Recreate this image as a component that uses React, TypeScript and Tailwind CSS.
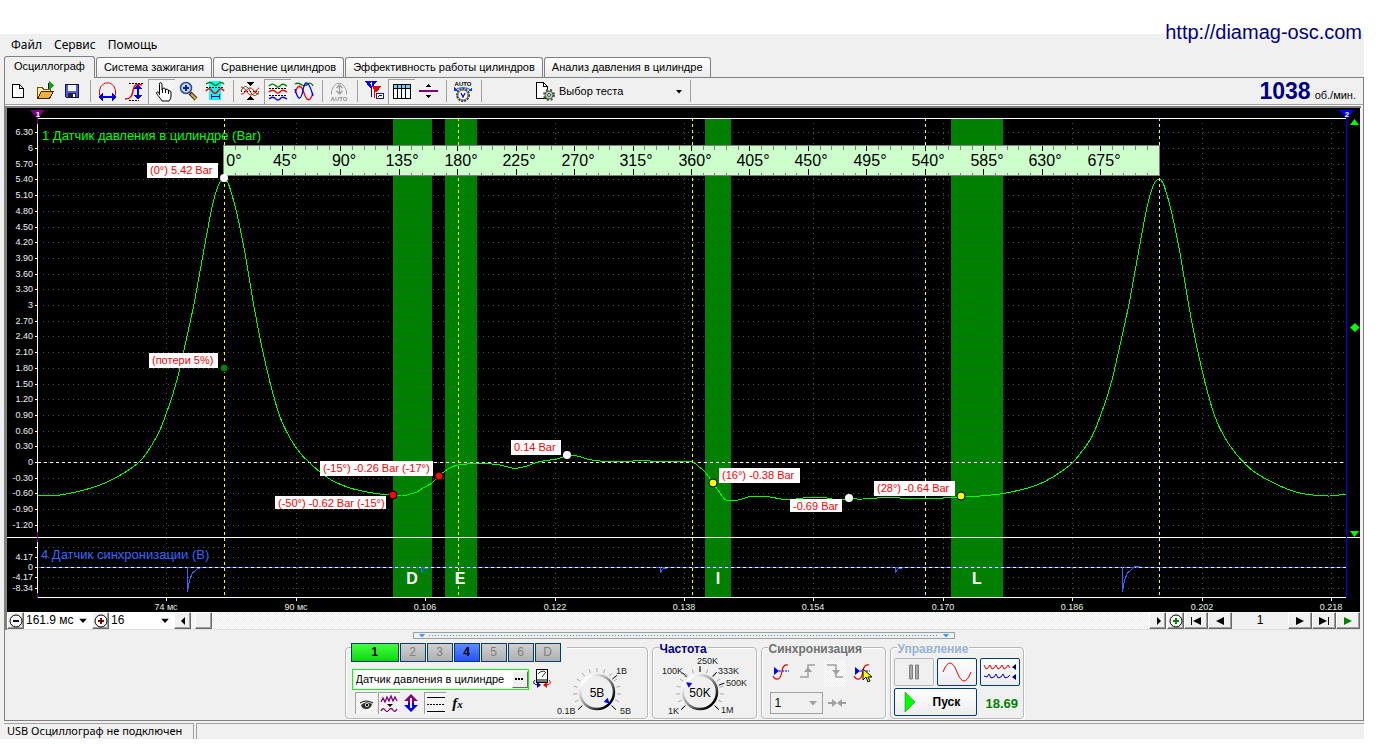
import React from "react";

type Pt = [number, number];

const TEXTURE =
  "bg-[repeating-conic-gradient(#ffffff_0_25%,#ececec_0_50%)] bg-[length:2px_2px]";

/* ---------- toolbar icons ---------- */

function Icon({ children, label }: { children: React.ReactNode; label?: string }) {
  return (
    <svg
      width="22"
      height="22"
      viewBox="0 0 22 22"
      fill="none"
      shapeRendering="crispEdges"
      aria-label={label}
      className="block shrink-0"
    >
      {children}
    </svg>
  );
}

const NewIcon = () => (
  <Icon>
    <path d="M4.500 4.500h7l4 4v9h-11z" fill="#fff" stroke="#000" />
    <path d="M11.500 4.500v4h4" stroke="#000" />
  </Icon>
);
const OpenIcon = () => (
  <Icon>
    <path d="M2.500 18.500v-11h5l1 2h7v3" fill="#ffe9a0" stroke="#7a5200" />
    <path d="M2.500 18.500l4-7h12l-4 7z" fill="#f0b040" stroke="#3a2600" />
    <path d="M13.500 9V3" stroke="#000" />
    <path d="M14 1v9l5-4.500z" fill="#00b000" />
  </Icon>
);
const SaveIcon = () => (
  <Icon>
    <path d="M3.500 4.500h13v13h-12l-1-1z" fill="#5b5bd0" stroke="#101050" />
    <rect x="6" y="5" width="8" height="6" fill="#f4f4f4" />
    <rect x="6" y="13" width="8" height="4" fill="#202040" />
    <rect x="11" y="14" width="2" height="3" fill="#fff" />
  </Icon>
);
const PeriodIcon = () => (
  <Icon>
    <path d="M2.500 15.500V11l1-4 3-3 2-1h4l2 1 3 3 1 4v4.500" stroke="#f00000" shapeRendering="auto" />
    <path d="M3 17h15" stroke="#0000f0" strokeWidth="2" />
    <path d="M1 17l5-4v8zM20 17l-5-4v8z" fill="#0000f0" />
  </Icon>
);
const AmplitudeIcon = () => (
  <Icon>
    <path d="M5 3.500h15M5 20.500h10" stroke="#000" strokeDasharray="2 1" />
    <path d="M1 19c6 0 7-3 8-8s2-8 9-6" stroke="#f00000" strokeWidth="1.500" shapeRendering="auto" />
    <path d="M14 6v12" stroke="#0000f0" strokeWidth="2" />
    <path d="M10 9l4-5 4 5zM10 15l4 5 4-5z" fill="#0000f0" />
  </Icon>
);
const HandIcon = () => (
  <Icon>
    <path
      d="M8.500 13.500v-10q0-2 1-2t1.500 2v5q.5-1.500 2-1.500t1.500 2q.5-1 1.800-.8t1.200 1.800q2-1 2.500 1v4q0 3-2 5h-7q-1-2-4-5.500-2.500-3-.8-3.500t2.300 2z"
      fill="#fff"
      stroke="#000"
      shapeRendering="auto"
    />
    <path d="M11.500 8v4M14.500 9v3M17.500 10v3" stroke="#000" />
  </Icon>
);
const MagnifierIcon = () => (
  <Icon>
    <path d="M12 13l6 6" stroke="#303030" strokeWidth="4" shapeRendering="auto" />
    <path d="M13 14l5 5" stroke="#e0b030" strokeWidth="2" shapeRendering="auto" />
    <circle cx="8" cy="8" r="5.500" fill="#b8dcf8" stroke="#304880" strokeWidth="1.500" shapeRendering="auto" />
    <path d="M8 5v6M5 8h6" stroke="#1020a0" strokeWidth="2" />
  </Icon>
);
const WindowIcon = () => (
  <Icon>
    <rect x="4" y="1" width="12" height="19" fill="#00ffff" />
    <path d="M1 4c3-2 5-2 7 0s3 2 5 0 4-2 6 0" stroke="#008000" strokeWidth="1.500" shapeRendering="auto" />
    <path d="M1 7.500h18" stroke="#000" strokeDasharray="2 1" />
    <path d="M1 11c2-3 4-3 6 0s4 3 6 0 4-3 6 0" stroke="#f00000" strokeWidth="1.500" shapeRendering="auto" />
    <path d="M6 16.500h8M6 14v5M14 14v5" stroke="#0000a0" />
  </Icon>
);
const OverlayIcon = () => (
  <Icon>
    <path d="M1 11c3-6 6-6 9 0s6 6 9 0" stroke="#008000" shapeRendering="auto" />
    <path d="M1 7c5 0 6 8 10 8s4-5 8-7M1 14c5 0 5-6 9-6s4 6 9 6" stroke="#f00000" shapeRendering="auto" />
    <path d="M1 11.500h18" stroke="#000" strokeDasharray="1 2" />
    <path d="M7 2h7l-3.500 4zM7 20h7l-3.500-4z" fill="#000" />
  </Icon>
);
const Wave3Icon = () => (
  <Icon>
    <path d="M2 5c3-3 5-2 7 0s3 1 5-1 4 0 6 1" stroke="#008000" strokeWidth="1.300" shapeRendering="auto" />
    <path d="M2 7.500h18M2 14.500h18" stroke="#000" strokeDasharray="2 1" />
    <path d="M2 11c3-3 5-2 7 0s3 1 5-1 4 0 6 1" stroke="#f00000" strokeWidth="1.300" shapeRendering="auto" />
    <path d="M2 18c3-3 5-2 7 0s3 1 5-1 4 0 6 1" stroke="#0000f0" strokeWidth="1.300" shapeRendering="auto" />
  </Icon>
);
const CrossWavesIcon = () => (
  <Icon>
    <path d="M1 4c3-2 5 0 7 1s4 1 6-1 4 0 5 2" stroke="#008000" strokeWidth="1.300" shapeRendering="auto" />
    <path d="M1 13c3-9 6-9 9 0s6 9 9 0" stroke="#f00000" strokeWidth="1.300" shapeRendering="auto" />
    <path d="M1 9c3 12 6 12 8 1s6-9 10 6" stroke="#0000f0" strokeWidth="1.300" shapeRendering="auto" />
  </Icon>
);
const AutoGrayIcon = () => (
  <Icon>
    <path d="M2.500 14.500v-4l2-4 3-3h5l3 3 2 4v4" stroke="#a0a0a0" shapeRendering="auto" />
    <path d="M10.500 5v9M7.500 8l3-3 3 3M7.500 11l3 3 3-3" stroke="#a0a0a0" strokeWidth="1.500" shapeRendering="auto" />
    <text x="10" y="21" textAnchor="middle" fontSize="6" fontWeight="700" fill="#909090" fontFamily="Liberation Sans, sans-serif">
      AUTO
    </text>
  </Icon>
);
const FlagsIcon = () => (
  <Icon>
    <path d="M1 1h12l-5 7H6z" fill="#0000f0" />
    <path d="M7.500 7v10" stroke="#0000f0" />
    <path d="M8 6h9l-4 6h-2z" fill="#f00000" />
    <path d="M10.500 11v7" stroke="#f00000" />
    <path d="M7 2v4M6 3h1" stroke="#fff" />
    <rect x="12.500" y="13.500" width="7" height="5" fill="#fff" stroke="#202060" />
    <path d="M14 17l2-2 2 1" stroke="#0000a0" />
  </Icon>
);
const TableIcon = () => (
  <Icon>
    <rect x="2.500" y="3.500" width="17" height="14" fill="#fff" stroke="#000" />
    <rect x="3" y="4" width="16" height="3" fill="#80c8f0" />
    <path d="M3 7.500h16M6.500 4v14M10.500 4v14M14.500 4v14" stroke="#000" />
  </Icon>
);
const DivideIcon = () => (
  <Icon>
    <path d="M1 11h19" stroke="#800080" strokeWidth="2" />
    <path d="M8 7h5l-2.500-3zM8 15h5l-2.500 3z" fill="#000" />
  </Icon>
);
const AutoKnobIcon = () => (
  <Icon>
    <text x="10" y="6" textAnchor="middle" fontSize="6" fontWeight="700" fill="#000" fontFamily="Liberation Sans, sans-serif">
      AUTO
    </text>
    <path d="M3 10c1-3 13-3 14 0" stroke="#0040f0" shapeRendering="auto" />
    <path d="M1 7v4h4zM19 7v4h-4z" fill="#0040f0" />
    <circle cx="10" cy="15" r="6" fill="#d8d8d8" stroke="#404040" strokeWidth="2" strokeDasharray="2 1" shapeRendering="auto" />
    <circle cx="10" cy="15" r="5" fill="#fff" stroke="#606060" shapeRendering="auto" />
    <path d="M8 13l2 4 2-4" stroke="#0000f0" strokeWidth="1.300" shapeRendering="auto" />
  </Icon>
);
const TestIcon = () => (
  <Icon>
    <path d="M3.500 2.500h7l4 4v12h-11z" fill="#fff" stroke="#000" />
    <path d="M10.500 2.500v4h4" stroke="#000" />
    <circle cx="16" cy="15" r="5" stroke="#405040" strokeWidth="2" strokeDasharray="2 2" shapeRendering="auto" />
    <circle cx="16" cy="15" r="4" fill="#b8c8b8" stroke="#506050" shapeRendering="auto" />
    <circle cx="16" cy="15" r="1.500" fill="#f0f0f0" stroke="#405040" shapeRendering="auto" />
  </Icon>
);

function Tool({ label, pressed, children }: { label: string; pressed?: boolean; children: React.ReactNode }) {
  return (
    <button
      type="button"
      aria-label={label}
      aria-pressed={pressed || undefined}
      className={
        "flex h-[25px] w-[27px] items-center justify-center " +
        (pressed ? "border-t border-l border-[#a0a0a0] " + TEXTURE : "")
      }
    >
      {children}
    </button>
  );
}

const Sep = () => (
  <div className="flex w-2 justify-center">
    <div className="h-[22px] w-px bg-[#a0a0a0]" />
  </div>
);

/* ---------- chart ---------- */

const rise: Pt[] = [
  [160, 430], [166, 414], [172, 397], [178, 376], [183, 354], [188, 332], [194, 304], [199, 277],
  [207, 233], [213, 203], [218, 186], [221, 181], [224, 179],
];
const fall: Pt[] = [
  [228, 183], [232, 195], [237, 214], [245, 253], [253, 301], [260, 338], [267, 370], [272, 390],
  [280, 417], [290, 438],
];
const shift = (p: Pt[], dx: number): Pt[] => p.map(([x, y]): Pt => [x + dx, y]);

const pressure: Pt[] = [
  [38, 496], [60, 495], [80, 491], [100, 485], [117, 477], [133, 467], [142, 459], [150, 448],
  ...rise,
  ...fall,
  [300, 453], [310, 463], [320, 472], [333, 481], [350, 488], [367, 492], [380, 494], [393, 495],
  [402, 496], [410, 494], [417, 492], [423, 488], [432, 483], [439, 476], [445, 471], [452, 467],
  [458, 465], [467, 464], [477, 463], [492, 464], [500, 465], [512, 468], [518, 468], [527, 466],
  [535, 463], [543, 461], [557, 459], [567, 456], [577, 456], [587, 459], [600, 461], [620, 462],
  [633, 461], [650, 461], [663, 462], [677, 461], [692, 462], [698, 466], [705, 472], [713, 483],
  [720, 493], [726, 500], [738, 500], [748, 497], [758, 496], [770, 497], [788, 500], [803, 498],
  [827, 498], [837, 500], [849, 499], [863, 499], [877, 498], [900, 498], [917, 499], [943, 498],
  [961, 497], [980, 496], [1000, 494], [1020, 490], [1037, 485], [1053, 477], [1070, 465],
  [1080, 454], [1090, 440],
  ...shift(rise, 935),
  ...shift(fall, 935),
  [1237, 455], [1253, 471], [1270, 481], [1287, 489], [1300, 493], [1313, 495], [1330, 496], [1346, 494],
];

function smooth(p: Pt[]): string {
  let d = `M${p[0][0]} ${p[0][1]}`;
  for (let i = 0; i < p.length - 1; i++) {
    const a = p[Math.max(0, i - 1)];
    const b = p[i];
    const c = p[i + 1];
    const e = p[Math.min(p.length - 1, i + 2)];
    d += ` C${b[0] + (c[0] - a[0]) / 6} ${b[1] + (c[1] - a[1]) / 6} ${c[0] - (e[0] - b[0]) / 6} ${c[1] - (e[1] - b[1]) / 6} ${c[0]} ${c[1]}`;
  }
  return d;
}

const yTicks = Array.from({ length: 26 }, (_, i) => {
  const k = 21 - i;
  const v = (k * 3) / 10;
  return { y: Math.round(462 - v * 52.33), label: k % 10 === 0 ? String(v) : v.toFixed(2) };
});
const syncTicks = [
  { y: 547, label: "" },
  { y: 557, label: "4.17" },
  { y: 567, label: "0" },
  { y: 577, label: "-4.17" },
  { y: 588, label: "-8.34" },
];
const xTicks = [
  { x: 166, label: "74 мс" },
  { x: 296, label: "90 мс" },
  { x: 425, label: "0.106" },
  { x: 555, label: "0.122" },
  { x: 684, label: "0.138" },
  { x: 813, label: "0.154" },
  { x: 943, label: "0.170" },
  { x: 1072, label: "0.186" },
  { x: 1202, label: "0.202" },
  { x: 1331, label: "0.218" },
];
const bands = [
  { x: 393, w: 39, letter: "D", lx: 412 },
  { x: 445, w: 32, letter: "E", lx: 460 },
  { x: 705, w: 26, letter: "I", lx: 718 },
  { x: 951, w: 52, letter: "L", lx: 977 },
];
const tags = [
  { x: 147, y: 163, w: 71, h: 15, t: "(0°) 5.42 Bar" },
  { x: 149, y: 353, w: 69, h: 15, t: "(потери 5%)" },
  { x: 320, y: 461, w: 113, h: 15, t: "(-15°) -0.26 Bar (-17°)" },
  { x: 275, y: 496, w: 111, h: 13, t: "(-50°) -0.62 Bar (-15°)" },
  { x: 511, y: 440, w: 50, h: 15, t: "0.14 Bar" },
  { x: 719, y: 468, w: 81, h: 15, t: "(16°) -0.38 Bar" },
  { x: 790, y: 499, w: 52, h: 13, t: "-0.69 Bar" },
  { x: 874, y: 481, w: 81, h: 15, t: "(28°) -0.64 Bar" },
];
const dots = [
  { x: 224, y: 178, c: "#fff" },
  { x: 224, y: 368, c: "#008000" },
  { x: 393, y: 495, c: "#f00" },
  { x: 439, y: 476, c: "#f00" },
  { x: 567, y: 455, c: "#fff" },
  { x: 713, y: 483, c: "#ff0" },
  { x: 849, y: 498, c: "#fff" },
  { x: 961, y: 496, c: "#ff0" },
];

function Chart() {
  return (
    <svg viewBox="7 108 1353 504" className="block h-auto w-full bg-black" fontFamily="'Liberation Sans', Arial, sans-serif" role="img" aria-label="Осциллограмма">
      <g shapeRendering="crispEdges">
        {bands.map((b) => (
          <rect key={b.letter} x={b.x} y="118" width={b.w} height="479" fill="#008000" />
        ))}
        {[...yTicks, ...syncTicks].map((t) => (
          <g key={t.y}>
            <path d={`M43 ${t.y}.5H1346`} stroke="#505050" strokeDasharray="1 4" />
            <path d={`M35 ${t.y}.5H38`} stroke="#fff" />
          </g>
        ))}
        {xTicks.map((t) => (
          <g key={t.x}>
            <path d={`M${t.x}.5 123V597`} stroke="#505050" strokeDasharray="1 4" />
            <path d={`M${t.x}.5 597V601`} stroke="#fff" />
          </g>
        ))}
        <path d="M38 462.500H1346" stroke="#fff" strokeDasharray="3 3" />
        <path d="M37.500 118V598" stroke="#fff" />
        <path d="M37 118.500H1346M7 537.500H1360M37 597.500H1346" stroke="#fff" />
        <path d="M37.500 116V124M37.500 532V542M37.500 593V598" stroke="#800080" />
        <path d="M38 567.500H1346" stroke="#fff" />
        <path d="M38 567.500H1346" stroke="#3060ff" strokeDasharray="3 3" />
      </g>
      <text x="42" y="140" fontSize="13" fill="#00ff00">1 Датчик давления в цилиндре (Bar)</text>
      <text x="41" y="559" fontSize="13" fill="#3366ff">4 Датчик синхронизации (В)</text>
      <g fontSize="9" fill="#f0f0f0" textAnchor="end">
        {yTicks.map((t) => <text key={t.y} x="33" y={t.y + 3}>{t.label}</text>)}
        {syncTicks.map((t) => <text key={t.y} x="33" y={t.y + 3}>{t.label}</text>)}
      </g>
      <g fontSize="9" fill="#e4f4e0" textAnchor="middle">
        {xTicks.map((t) => <text key={t.x} x={t.x} y="610">{t.label}</text>)}
      </g>
      <g shapeRendering="crispEdges" fill="none">
        <path d={smooth(pressure)} stroke="#00ff00" />
        <path
          d="M187.500 567V592L189.500 580 192.500 573 197 569 203 567M421.500 567V572L424 569 428 568M660.500 567V572L663 569 667 568M895.500 567V572L898 569 902 568M1122.500 567V592L1124.500 580 1127.500 573 1132 569 1136 566 1140 567"
          stroke="#3366ff"
        />
        <path d="M224.500 118V595M458.500 118V595M692.500 118V595M925.500 118V595M1159.500 118V595" stroke="#ffff00" strokeDasharray="3 3" />
      </g>
      <g shapeRendering="crispEdges">
        <rect x="223.500" y="145.500" width="936" height="30" fill="#ccffcc" stroke="#808080" />
        {Array.from({ length: 79 }, (_, i) => i + 1).map((i) => {
          const x = Math.floor(224 + (i * 935) / 80);
          return i % 5 === 0 ? (
            <path key={i} d={`M${x}.5 146v5M${x}.5 175v-6`} stroke="#000" />
          ) : (
            <path key={i} d={`M${x}.5 146v4M${x}.5 175v-2`} stroke="#808080" />
          );
        })}
      </g>
      <g fontSize="16" fill="#000" textAnchor="middle">
        {Array.from({ length: 16 }, (_, i) => (
          <text key={i} x={i === 0 ? 234 : Math.round(227 + (i * 935) / 16)} y="166">{i * 45}°</text>
        ))}
      </g>
      <g fontSize="16" fontWeight="700" fill="#fff" textAnchor="middle">
        {bands.map((b) => <text key={b.letter} x={b.lx} y="584">{b.letter}</text>)}
      </g>
      {tags.map((t) => (
        <g key={t.t}>
          <rect x={t.x} y={t.y} width={t.w} height={t.h} fill="#fff" />
          <text x={t.x + 3} y={t.y + 11} fontSize="11" fill="#ff0000">{t.t}</text>
        </g>
      ))}
      {dots.map((d) => (
        <circle key={d.x + "-" + d.y} cx={d.x} cy={d.y} r="4" fill={d.c} stroke={d.c === "#fff" ? "#fff" : "#000"} strokeWidth={d.c === "#fff" ? 0 : 1} />
      ))}
      <path d="M30 110h15l-7 8h-1z" fill="#800080" />
      <text x="38" y="117" fontSize="8" fontWeight="700" fill="#fff" textAnchor="middle">1</text>
      <path d="M1346.500 118V598" stroke="#0000ff" strokeWidth="1" shapeRendering="crispEdges" />
      <path d="M1339 110h15l-7 8h-1z" fill="#0000ff" />
      <text x="1347" y="117" fontSize="8" fontWeight="700" fill="#fff" textAnchor="middle">2</text>
      <path d="M1350 125h9l-4.500-6zM1350 531h9l-4.500 6zM1350 327.500l5-4.500 4.500 4.500-4.500 4.500z" fill="#00ff00" />
    </svg>
  );
}

/* ---------- navigation row ---------- */

const Caret = () => (
  <svg width="8" height="5" viewBox="0 0 8 5" className="pointer-events-none absolute top-1/2 right-[5px] -translate-y-1/2">
    <path d="M0 0h8L4 4.500z" fill="#000" />
  </svg>
);

function NavButton({ label, wide, children }: { label: string; wide?: boolean; children?: React.ReactNode }) {
  return (
    <button
      type="button"
      aria-label={label}
      className={
        "flex h-[17px] items-center justify-center border border-t-white border-l-white border-r-[#696969] border-b-[#696969] bg-[#f0f0f0] shadow-[inset_-1px_-1px_0_#a0a0a0] " +
        (wide ? "w-6" : "w-[17px]")
      }
    >
      {children}
    </button>
  );
}

function ZoomGlyph({ color, plus }: { color: string; plus?: boolean }) {
  return (
    <svg width="14" height="14" viewBox="0 0 14 14">
      <circle cx="7" cy="7" r="6" fill="#fff" stroke="#000" />
      <path d={plus ? "M4 7h6M7 4v6" : "M4 7h6"} stroke={color} strokeWidth="2" />
    </svg>
  );
}

function Glyph({ d, color }: { d: string; color: string }) {
  return (
    <svg width="12" height="10" viewBox="0 0 12 10">
      <path d={d} fill={color} />
    </svg>
  );
}

function NavRow() {
  return (
    <div className="flex h-[18px] items-start border-b border-[#e0e0e0] bg-[#f0f0f0]">
      <NavButton label="Уменьшить масштаб"><ZoomGlyph color="#000080" /></NavButton>
      <div className="relative">
        <select aria-label="Длительность" className="block h-[17px] w-[68px] appearance-none bg-white pl-[2px] text-[12px] leading-[17px]">
          <option>161.9 мс</option>
        </select>
        <Caret />
      </div>
      <NavButton label="Увеличить масштаб"><ZoomGlyph color="#800000" plus /></NavButton>
      <div className="relative">
        <select aria-label="Масштаб" className="block h-[17px] w-[65px] appearance-none bg-white pl-[2px] text-[12px] leading-[17px]">
          <option>16</option>
        </select>
        <Caret />
      </div>
      <NavButton label="Прокрутить влево"><Glyph d="M8 1v8L4 5z" color="#000" /></NavButton>
      <div className={"flex h-[17px] flex-1 pl-1 " + TEXTURE}>
        <NavButton label="Ползунок" />
      </div>
      <NavButton label="Прокрутить вправо"><Glyph d="M5 1v8l4-4z" color="#000" /></NavButton>
      <div className="w-px" />
      <NavButton label="Добавить"><ZoomGlyph color="#008000" plus /></NavButton>
      <NavButton label="В начало" wide><Glyph d="M1 1h1v8H1zM11 1v8L3 5z" color="#000" /></NavButton>
      <NavButton label="Назад" wide><Glyph d="M10 1v8L2 5z" color="#000" /></NavButton>
      <span className="w-14 text-center text-[12px] leading-[17px]">1</span>
      <NavButton label="Вперёд" wide><Glyph d="M2 1v8l8-4z" color="#000" /></NavButton>
      <NavButton label="В конец" wide><Glyph d="M1 1v8l8-4zM10 1h1v8h-1z" color="#000" /></NavButton>
      <NavButton label="Воспроизвести" wide><Glyph d="M2 1v8l8-4z" color="#008000" /></NavButton>
    </div>
  );
}

/* ---------- control panel ---------- */

function Group({ title, tone, className, children }: { title?: string; tone?: string; className: string; children: React.ReactNode }) {
  return (
    <section aria-label={title} className={"relative mt-[6px] h-[72px] rounded-[4px] border border-[#b8b8b8] shadow-[inset_1px_1px_0_#fff,1px_1px_0_#fff] " + className}>
      {title && (
        <h2 className={"absolute top-[-6px] left-[6px] bg-[#f0f0f0] px-px text-[12px] leading-[14px] font-bold " + tone}>{title}</h2>
      )}
      {children}
    </section>
  );
}

const rad = (deg: number) => (deg * Math.PI) / 180;

interface KnobLabel { x: number; y: number; t: string }

function Knob({ id, w, cx, value, labels, marks, pointer }: { id: string; w: number; cx: number; value: string; labels: KnobLabel[]; marks: number[]; pointer: number }) {
  const cy = 44;
  const ray = (a: number, r: number) => `${(cx + r * Math.cos(rad(a))).toFixed(2)} ${(cy - r * Math.sin(rad(a))).toFixed(2)}`;
  return (
    <svg width={w} height="70" viewBox={`0 0 ${w} 70`} className="block shrink-0" fontFamily="'Liberation Sans', Arial, sans-serif" role="img" aria-label={value}>
      <defs>
        <linearGradient id={id} x1="0" y1="0" x2="1" y2="1">
          <stop offset="0.150" stopColor="#ffffff" />
          <stop offset="0.500" stopColor="#909090" />
          <stop offset="0.850" stopColor="#000000" />
        </linearGradient>
      </defs>
      {Array.from({ length: 15 }, (_, i) => 223 - i * 19).map((a) => (
        <path key={a} d={`M${ray(a, 20)}L${ray(a, 24)}`} stroke="#a8a8a8" />
      ))}
      {marks.map((a) => (
        <path key={a} d={`M${ray(a, 20)}L${ray(a, 26)}`} stroke="#000" />
      ))}
      <circle cx={cx} cy={cy} r="17" fill="#f0f0f0" stroke={`url(#${id})`} strokeWidth="2.500" />
      <path d={`M${ray(pointer - 14, 12)}L${ray(pointer, 17)}L${ray(pointer + 14, 12)}z`} fill="#0000f0" />
      <text x={cx} y={cy + 5} fontSize="12" textAnchor="middle" fill="#000">{value}</text>
      {labels.map((l) => (
        <text key={l.t} x={l.x} y={l.y} fontSize="9" fill="#202020">{l.t}</text>
      ))}
    </svg>
  );
}

const channelBase = "h-[19px] border border-[#003c74] text-[12px] leading-[17px]";

function ChannelGroup() {
  return (
    <Group className="w-[303px]">
      <div className="flex">
        <div className="w-[208px] shrink-0">
          <div className="-mt-[5px] ml-[5px] flex w-[216px] gap-px bg-[#f0f0f0]">
            <button type="button" className={channelBase + " w-12 bg-linear-to-b from-[#40ff40] to-[#00d800] font-bold"}>1</button>
            {["2", "3", "4", "5", "6", "D"].map((c) => (
              <button
                key={c}
                type="button"
                className={channelBase + " w-[26px] " + (c === "4" ? "bg-linear-to-b from-[#6088ff] to-[#2850ff] font-bold text-black" : "bg-linear-to-b from-[#d0d0d0] to-[#b0b0b0] text-[#808080]")}
              >
                {c}
              </button>
            ))}
          </div>
          <div className="mt-[6px] ml-[6px] flex items-center gap-[3px]">
            <div className="flex h-[21px] w-[177px] shrink-0 items-center border border-[#00ff00] bg-white">
              <input aria-label="Датчик" defaultValue="Датчик давления в цилиндре" className="h-full min-w-0 flex-1 bg-white pl-[3px] text-[11px] outline-none" />
              <button type="button" aria-label="Выбрать датчик" className="flex h-[17px] w-4 items-center justify-center border border-t-white border-l-white border-r-[#696969] border-b-[#696969] bg-[#f0f0f0]">
                <svg width="9" height="2" viewBox="0 0 9 2"><path d="M0 0h2v2H0zM3 0h2v2H3zM6 0h2v2H6z" fill="#000" /></svg>
              </button>
            </div>
            <button type="button" aria-label="Калибровка" className="shrink-0">
              <svg width="20" height="22" viewBox="0 0 20 22" fill="none">
                <rect x="4.500" y="1.500" width="11" height="13" fill="#fff" stroke="#000" />
                <path d="M5 11h10v3H5z" fill="#708070" />
                <path d="M6 6l2-2 4-1 2 2M10 9l3-4" stroke="#303030" />
                <path d="M3 12q-4 4 3 5" stroke="#0000a0" />
                <path d="M5 14v6l4-3z" fill="#0000a0" />
                <path d="M17 12q4 4-3 5" stroke="#f00000" />
                <path d="M15 14v6l-4-3z" fill="#f00000" />
              </svg>
            </button>
          </div>
          <div className="mt-[2px] ml-[9px] flex items-center gap-px">
            <PanelButton label="Показать" pressed>
              <path d="M5 12q5-5 11-1-1 5-6 5-4 0-5-4z" fill="#303030" />
              <path d="M4 10q6-4 13 0" stroke="#000" />
              <circle cx="11" cy="12" r="2" fill="#fff" />
              <circle cx="11" cy="12" r="1.200" fill="#000" />
            </PanelButton>
            <PanelButton label="Фильтр" pressed>
              <path d="M2 9l2-4 2 4 2-5 2 4 2-5 2 5 2-4 2 4M2 18q2-4 4-1t4 0 4 0 4-1" stroke="#800080" strokeWidth="1.300" />
              <path d="M8 11h6l-3 3z" fill="#000" />
            </PanelButton>
            <PanelButton label="Смещение">
              <path d="M3 9l7-7 7 7h-4v3H7V9z" fill="#800080" />
              <path d="M3 13l7 7 7-7h-4v-2H7v2z" fill="#0000f0" />
              <path d="M10 6v10" stroke="#f0f0f0" strokeWidth="2" />
            </PanelButton>
            <PanelButton label="Линии" pressed>
              <path d="M2 4.500h18M2 18.500h18" stroke="#000" />
              <path d="M2 11.500h18" stroke="#000" strokeDasharray="2 1" />
            </PanelButton>
            <button type="button" className="h-[22px] w-[22px] font-['Liberation_Serif',serif] text-[15px] leading-[22px] font-bold italic">
              f<span className="text-[11px]">x</span>
            </button>
          </div>
        </div>
        <Knob
          id="gain"
          w={93}
          cx={43}
          value="5В"
          pointer={-42}
          marks={[40, -43, 223]}
          labels={[{ x: 62, y: 26, t: "1В" }, { x: 3, y: 66, t: "0.1В" }, { x: 66, y: 66, t: "5В" }]}
        />
      </div>
    </Group>
  );
}

function PanelButton({ label, pressed, children }: { label: string; pressed?: boolean; children: React.ReactNode }) {
  return (
    <button type="button" aria-label={label} className={"h-[22px] w-[22px] " + (pressed ? "border-t border-l border-[#a0a0a0] " + TEXTURE : "")}>
      <svg width="22" height="22" viewBox="0 0 22 22" fill="none">{children}</svg>
    </button>
  );
}

const SyncCurve = () => (
  <>
    <path d="M3 16q2 4 5 3t4-8 6-6" stroke="#f00000" strokeWidth="1.200" />
    <path d="M4 7v8l5-4z" fill="#0000f0" />
    <path d="M9 11h10" stroke="#0000f0" strokeDasharray="2 1" />
  </>
);

function ControlPanel() {
  return (
    <div className="flex flex-wrap items-start justify-center gap-x-1 pb-px">
      <ChannelGroup />
      <Group title="Частота" tone="text-[#000080]" className="w-[105px]">
        <Knob
          id="rate"
          w={103}
          cx={47}
          value="50K"
          pointer={145}
          marks={[223, 132, 90, 50, 20, -43]}
          labels={[
            { x: 9, y: 26, t: "100K" },
            { x: 44, y: 16, t: "250K" },
            { x: 65, y: 26, t: "333K" },
            { x: 73, y: 38, t: "500K" },
            { x: 15, y: 66, t: "1K" },
            { x: 68, y: 65, t: "1M" },
          ]}
        />
      </Group>
      <Group title="Синхронизация" tone="text-[#707070]" className="w-[125px] px-2 pt-3">
        <div className="flex gap-[5px]">
          <PanelButton label="Синхронизация по уровню"><SyncCurve /></PanelButton>
          <PanelButton label="Передний фронт">
            <path d="M3 17h8V5h7" stroke="#a0a0a0" strokeWidth="1.500" />
            <path d="M7 12l4-5 4 5z" fill="#a0a0a0" />
          </PanelButton>
          <div className={TEXTURE}>
            <PanelButton label="Задний фронт">
              <path d="M3 5h9v12h7" stroke="#a0a0a0" strokeWidth="1.500" />
              <path d="M8 10l4 5 4-5z" fill="#a0a0a0" />
            </PanelButton>
          </div>
          <PanelButton label="Выбрать уровень">
            <SyncCurve />
            <path d="M12 9v11l3-3 2 5 2-1-2-4h4z" fill="#ffff00" stroke="#000" />
          </PanelButton>
        </div>
        <div className="mt-[5px] flex items-center gap-1">
          <div className="relative">
            <select aria-label="Канал синхронизации" className="block h-[22px] w-[53px] appearance-none border border-[#a0a0a0] bg-[#f0f0f0] pl-1 text-[12px]">
              <option>1</option>
            </select>
            <svg width="8" height="5" viewBox="0 0 8 5" className="pointer-events-none absolute top-[9px] right-[6px]"><path d="M0 0h8L4 4.500z" fill="#a0a0a0" /></svg>
          </div>
          <svg width="20" height="10" viewBox="0 0 20 10" aria-hidden="true">
            <path d="M1 4h4V1l5 4-5 4V6H1zM19 4h-4V1l-5 4 5 4V6h4z" fill="#a0a0a0" />
          </svg>
        </div>
      </Group>
      <Group title="Управление" tone="text-[#99b4d1]" className="w-[134px] px-[3px] pt-[10px]">
        <div className="flex gap-[3px]">
          <button type="button" aria-label="Пауза" className="flex h-7 w-10 items-center justify-center rounded-[2px] border border-[#b8b8b8] bg-[#f0f0f0]">
            <svg width="12" height="16" viewBox="0 0 12 16"><path d="M1.500 1h3v14h-3zM7.500 1h3v14h-3z" fill="#a8a8a8" stroke="#808080" /></svg>
          </button>
          <button type="button" aria-label="Синус" className="flex h-7 w-10 items-center justify-center rounded-[2px] border border-[#003c74] bg-linear-to-b from-white to-[#ececec]">
            <svg width="30" height="20" viewBox="0 0 30 20" fill="none"><path d="M1 10Q8-8 15 10T29 10" stroke="#f00000" /></svg>
          </button>
          <button type="button" aria-label="Каналы" className="flex h-7 w-10 items-center justify-center rounded-[2px] border border-[#003c74] bg-linear-to-b from-white to-[#ececec]">
            <svg width="34" height="20" viewBox="0 0 34 20" fill="none">
              <path d="M1 3l2 4 2-1 2-3 2 4 2-1 2-3 2 4 2-1 2-3 2 4 2-1 2-3 2 3" stroke="#f00000" />
              <path d="M1 14l3 1 2-3 2 4 3-1 2-3 2 4 3-1 2-3 2 4 3-1 2-2" stroke="#0000f0" />
              <path d="M33 2v6l-4-3zM33 12v6l-4-3z" fill="#000080" />
            </svg>
          </button>
        </div>
        <div className="mt-[2px] flex items-center">
          <button type="button" className="flex h-7 w-[83px] items-center rounded-[2px] border border-[#003c74] bg-linear-to-b from-white to-[#ececec] pl-[9px] text-[12px] font-bold">
            <svg width="11" height="20" viewBox="0 0 11 20" className="mr-[18px]"><path d="M1 0v20L11 10z" fill="#00ff00" stroke="#008000" strokeWidth=".5" /></svg>
            Пуск
          </button>
          <output className="mt-1 ml-[9px] text-[13px] leading-4 font-bold text-[#008000]">18.69</output>
        </div>
      </Group>
    </div>
  );
}

const tabs = ["Система зажигания", "Сравнение цилиндров", "Эффективность работы цилиндров", "Анализ давления в цилиндре"];

export default function App() {
  return (
    <div className="min-h-screen bg-white pt-[34px] font-['Liberation_Sans',Arial,sans-serif] text-[11px] text-black">
      <div className="relative mr-3 bg-[#f0f0f0]">
        <a href="http://diamag-osc.com" className="absolute -top-[14px] right-[2px] text-[20px] leading-6 text-[#000080]">
          http://diamag-osc.com
        </a>
        <nav className="flex h-[22px] items-center gap-3 pl-[11px] font-['Noto_Sans','Open_Sans',sans-serif] text-[12px] leading-4">
          <button type="button">Файл</button>
          <button type="button">Сервис</button>
          <button type="button">Помощь</button>
        </nav>

        <div className="ml-1 flex h-[22px] items-end gap-px border-b border-[#808080]" role="tablist">
          <button type="button" role="tab" aria-selected="true" className="-mb-px h-[22px] rounded-t-[3px] border border-b-0 border-[#808080] bg-[#f0f0f0] px-[9px] pb-[2px]">
            Осциллограф
          </button>
          {tabs.map((t) => (
            <button key={t} type="button" role="tab" aria-selected="false" className="h-5 rounded-t-[3px] border border-b-0 border-[#808080] bg-linear-to-b from-white to-[#ececec] px-[7px]">
              {t}
            </button>
          ))}
        </div>

        <main className="ml-1 border-x border-b border-[#808080]">
          <div className="flex h-[26px] items-center">
            <Tool label="Новый"><NewIcon /></Tool>
            <Tool label="Открыть"><OpenIcon /></Tool>
            <Tool label="Сохранить"><SaveIcon /></Tool>
            <Sep />
            <Tool label="Период"><PeriodIcon /></Tool>
            <Tool label="Амплитуда"><AmplitudeIcon /></Tool>
            <Tool label="Рука" pressed><HandIcon /></Tool>
            <Tool label="Лупа"><MagnifierIcon /></Tool>
            <Tool label="Окно"><WindowIcon /></Tool>
            <Sep />
            <Tool label="Наложить"><OverlayIcon /></Tool>
            <Tool label="Разделить" pressed><Wave3Icon /></Tool>
            <Tool label="Совместить"><CrossWavesIcon /></Tool>
            <Sep />
            <Tool label="Авто"><AutoGrayIcon /></Tool>
            <Sep />
            <Tool label="Маркеры"><FlagsIcon /></Tool>
            <Tool label="Таблица" pressed><TableIcon /></Tool>
            <Tool label="Граница"><DivideIcon /></Tool>
            <Sep />
            <Tool label="Автонастройка"><AutoKnobIcon /></Tool>
            <Sep />
            <label className="ml-12 flex items-center">
              <TestIcon />
              <span className="relative">
                <select aria-label="Тест" className="block h-5 w-[131px] appearance-none pl-1 text-[11px]">
                  <option>Выбор теста</option>
                </select>
                <svg width="6" height="4" viewBox="0 0 6 4" className="pointer-events-none absolute top-[9px] right-1"><path d="M0 0h6L3 3.500z" fill="#000" /></svg>
              </span>
            </label>
            <Sep />
            <div className="flex flex-1 items-baseline justify-end gap-1 pr-[7px]">
              <strong className="text-[23px] leading-[26px] text-[#000080]">1038</strong>
              <span>об./мин.</span>
            </div>
          </div>
          <div className="h-px bg-[#a0a0a0]" />
          <div className="h-px bg-white" />

          <div className="mr-[2px] border-t-2 border-l-2 border-[#808080]">
            <div className="border-r border-[#f0f0f0]">
              <Chart />
              <NavRow />
            </div>
          </div>

          <div className="mt-[2px] flex justify-center">
            <div role="separator" className="flex h-[7px] w-[542px] items-center gap-1 border border-[#a0a0a0] px-[5px]">
              <svg width="6" height="4" viewBox="0 0 6 4"><path d="M0 0h6L3 3.500z" fill="#3399ff" /></svg>
              <div className="h-px flex-1 bg-[repeating-linear-gradient(90deg,#3399ff_0_1px,transparent_1px_3px)]" />
              <svg width="6" height="4" viewBox="0 0 6 4"><path d="M0 0h6L3 3.500z" fill="#3399ff" /></svg>
            </div>
          </div>

          <div className="mt-[2px]">
            <ControlPanel />
          </div>
        </main>

        <footer className="mt-[2px] ml-1 flex h-4 gap-[2px] font-['Noto_Sans','Open_Sans',sans-serif] text-[11px]">
          <div className="w-[190px] border-t border-r border-[#a0a0a0] pl-[3px] leading-[14px] whitespace-nowrap">USB Осциллограф не подключен</div>
          <div className="flex-1 border-t border-l border-[#a0a0a0]" />
        </footer>
      </div>
    </div>
  );
}
